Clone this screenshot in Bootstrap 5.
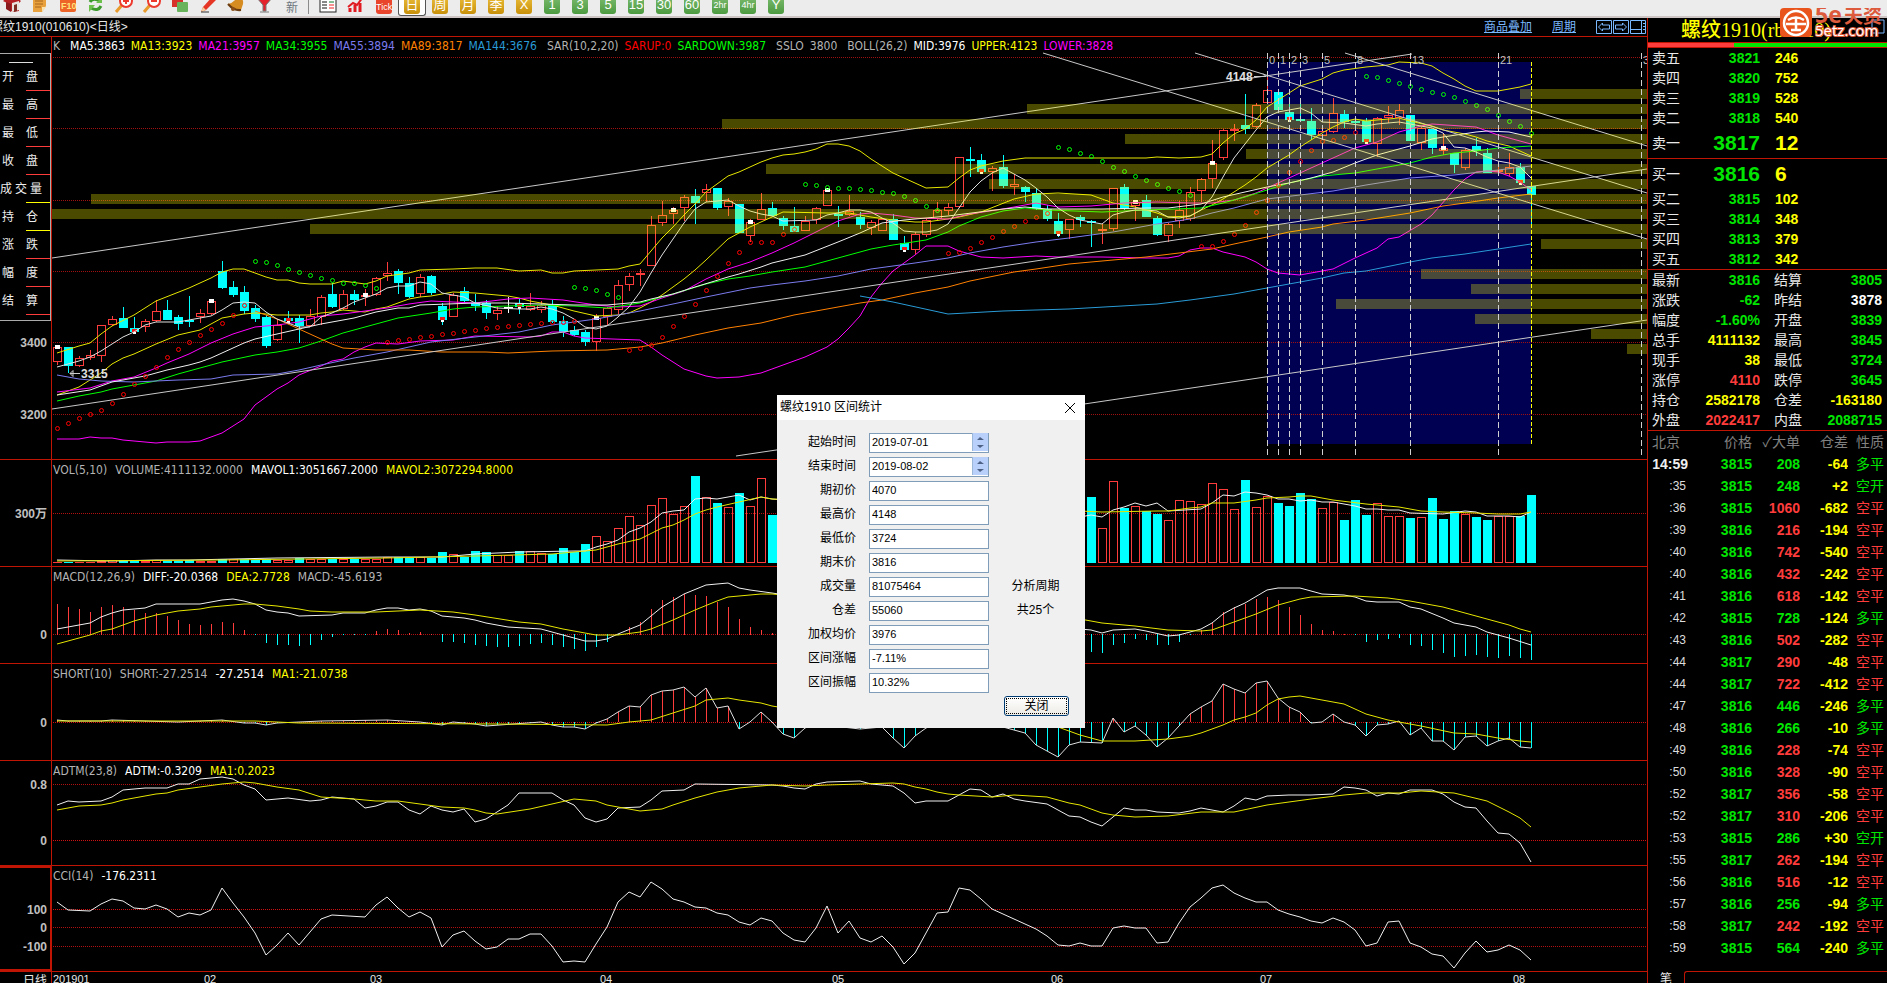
<!DOCTYPE html>
<html lang="zh-CN">
<head>
<meta charset="utf-8">
<meta name="viewport" content="width=device-width, initial-scale=1">
<title>螺纹1910 日线</title>
<link href="https://cdn.jsdelivr.net/npm/bootstrap@5.3.0/dist/css/bootstrap.min.css" rel="stylesheet">
<style>
:root{--line:#c01404;--up:#ff3c3c;--dn:#00ffff;--cjk:"Liberation Sans","Noto Sans CJK SC",sans-serif;--tah:"DejaVu Sans Condensed","Noto Sans CJK SC",sans-serif}
body{background:#000;color:#e8e8e8;font-family:var(--cjk);font-size:12px;line-height:18px;overflow:hidden}
.tools{background:#ececec;height:18px;border-bottom:2px solid #cdc6c4;overflow:hidden}
.tools button:first-child{margin-left:-2px}
.tools button{width:28px;height:16px;flex:none;background:none;border:0;padding:0 4px;overflow:hidden}
.tools button svg{display:block;width:20px;height:16px}
.tools .mode span{display:block;width:16px;height:20px;margin:-8px auto 0;border-radius:3px;background:linear-gradient(#efc341,#c8900a);color:#fff;font-size:13px;line-height:22px;text-align:center;white-space:nowrap}
.tools .mode.per span{background:linear-gradient(#82bf74,#4c9a40)}
.tools .mode.tick span{background:#e8452c;font-size:9px;line-height:26px}
.tools .mode.tight span{font-size:9px}
.tools .mode.on{background:#fff;border:1px solid #555;border-top:0;border-radius:0 0 3px 3px;padding:0 3px}
.tools .divide{width:1px;background:#8b8b8b;height:14px;flex:none;margin:0 5px 0 2px}
.title-row{height:18px}
.title-row h1{font-size:12px;line-height:18px;font-weight:400;margin:0 0 0 -9px;white-space:nowrap}
.title-row a{color:#7ab8ff;font-size:12px;line-height:16px}
.title-row .nav-ico{width:50px;height:14px}
.pane{border-top:1px solid var(--line);min-height:0;flex-basis:0;overflow:hidden}
.pane .scale{width:52px;flex:none;border-right:1px solid var(--line);min-height:0}
.pane .plot{display:grid;grid-template:minmax(0,1fr)/minmax(0,1fr);flex:1;min-width:0}
.pane .plot>*{grid-area:1/1}
.pane svg{display:block;width:100%;height:100%;min-height:0}
.scale text{fill:#c0c0c0;font:bold 12px var(--cjk);text-anchor:end}
.legend-row{font-family:var(--tah);font-size:12px;line-height:20px;padding-left:1px;gap:8px;white-space:nowrap;z-index:1;height:20px;color:#b4b4b4}
.legend-row.price{gap:6px;line-height:19px}
.cci .scale{border:2px solid var(--line);border-left:0}
.w{color:#fff}.y{color:#ffff00}.g{color:#00e600}.r{color:#ff3c3c}
.quick{position:absolute;left:0;top:53px;width:51px;border:solid #aaa;border-width:1px 1px 1px 0;background:#000;z-index:2;padding-top:8px;height:268px}
.quick i{display:block;width:24px;height:1px;margin-left:9px;background:#ddd}
.quick button{display:flex;justify-content:space-between;width:50px;height:28px;border:0;background:linear-gradient(var(--c),var(--c)) right bottom/24px 1px no-repeat;color:#eee;font-size:12px;line-height:28px;padding:0 12px 0 2px}
.quick button.three{padding:0 8px 0 0}
.side{width:240px;flex:none;border-left:1px solid var(--line)}
.side .code{height:24px;font-family:"Liberation Serif","Noto Sans CJK SC",serif;font-size:20px;line-height:24px;color:#ffff00;margin:0;padding-left:33px;white-space:nowrap}
.ratio{height:6px;border:solid var(--line);border-width:1px 0;background:#00e600}
.ratio div{background:#ff3c3c;height:4px}
.side table{width:239px;table-layout:fixed;border-collapse:collapse;font-size:14px;margin:0}
.side td,.side th{padding:0;font-weight:400;white-space:nowrap;overflow:hidden}
.side .n{font-weight:700;text-align:right}
.book tr,.stat tr{height:20px;line-height:20px}
.book .lab,.stat .lab{padding-left:4px}
.book .v{text-align:left;font-weight:700;padding-left:15px;color:#ffff00}
.book tr.top{height:30px;line-height:30px}
.book tr.top .n,.book tr.top .v{font-size:21px}
.ruled{border-bottom:1px solid var(--line)}
.ticks tr{height:22px;line-height:22px}
.ticks th{color:#808080;text-align:right}
.ticks td:first-child{font-size:12px;text-align:right;padding-right:2px;color:#ddd}
.ticks tr.full td:first-child{font-size:14px;font-weight:700;color:#eee;padding-right:0}
.tabs{height:12px;margin-top:auto;overflow:hidden}
.tabs span{width:36px;padding-left:12px;line-height:16px;flex:none}
.tabs div{flex:1;border:solid var(--line);border-width:1px 0 0 1px;border-radius:3px 0 0 0}
.brand{position:absolute;right:2px;top:8px;width:105px;height:30px;z-index:3}
.dlg{position:absolute;left:777px;top:395px;width:308px;height:333px;background:#f0f0f0;color:#000;z-index:5}
.dlg header{height:25px;background:#fff;padding:0 8px 0 3px}
.dlg header h2{font:12px/25px var(--cjk);margin:0}
.dlg header button{border:0;background:none;padding:0;width:14px;height:25px}
.dlg form{padding:12px 16px 0 0}
.dlg .line{height:24px;display:grid;grid-template-columns:79px 120px 1fr;column-gap:13px;line-height:20px}
.dlg label{text-align:right}
.dlg input{width:100%;height:20px;border:1px solid #7f9db9;background:#fff;font-size:11px;padding:0 0 2px 2px;border-radius:0;color:#000;line-height:16px;min-width:0}
.spin{position:relative}
.spin svg{position:absolute;right:1px;top:1px;width:16px;height:18px}
.dlg .ok{display:block;margin-left:auto;width:65px;height:20px;border:1px solid #003c74;border-radius:3px;background:linear-gradient(#fff,#ecebe5);padding:1px;color:#000}
.dlg .ok span{display:block;border:1px dotted #000;line-height:14px}
</style>
</head>
<body>
<div class="d-flex flex-column vh-100">
<nav class="tools d-flex" aria-label="工具栏">
<button aria-label="首页"><svg viewBox="0 0 20 16"><path d="M1 1L10-6l9 7-2 2v8l-6 1-6-3V3z" fill="#b52025"/><path d="M4 2l5 2v8l-5-3z" fill="#8a1a1d"/><path d="M10 3l7-2v9l-7 2z" fill="#e9e3dd"/><path d="M12 5l3-1v7l-3 1z" fill="#7c2b22"/></svg></button>
<button aria-label="记事"><svg viewBox="0 0 20 16"><path d="M3-4h13v10l-4 6H3z" fill="#e8a13c"/><path d="M5 1h8M5 4h8M5 7h6" stroke="#a8641a"/><path d="M12 12V7h4z" fill="#fbe3b0"/></svg></button>
<button aria-label="F10"><svg viewBox="0 0 20 16"><rect x="2" y="-6" width="16" height="18" rx="2" fill="#ee6428"/><text x="3" y="9" font-size="9" font-weight="bold" fill="#ffe27a">F10</text></svg></button>
<button aria-label="刷新"><svg viewBox="0 0 20 16" fill="none" stroke="#3c9a2c" stroke-width="3"><path d="M4 2q3-5 10-1M15 6q-3 6-10 2"/><path d="M16-3v6h-6zM3 12V5h6z" fill="#6cc04c" stroke="none"/></svg></button>
<button aria-label="放大"><svg viewBox="0 0 20 16"><path d="M8 5l-6 7" stroke="#e89a2c" stroke-width="3"/><circle cx="12" cy="1" r="6" fill="#fff" stroke="#ed3a2e" stroke-width="2"/><path d="M9 1h6M12-2v6" stroke="#ed3a2e" stroke-width="2"/></svg></button>
<button aria-label="缩小"><svg viewBox="0 0 20 16"><path d="M8 5l-6 7" stroke="#e89a2c" stroke-width="3"/><circle cx="12" cy="1" r="6" fill="#fff" stroke="#ed3a2e" stroke-width="2"/><path d="M9 1h6" stroke="#ed3a2e" stroke-width="2"/></svg></button>
<button aria-label="叠加"><svg viewBox="0 0 20 16"><rect x="2" y="-4" width="11" height="11" fill="#d8312b"/><rect x="7" y="2" width="11" height="10" rx="1" fill="#69b35c"/></svg></button>
<button aria-label="画线"><svg viewBox="0 0 20 16"><path d="M3 12l2-5L15-4l4 3L8 10z" fill="#e53525"/><path d="M3 12l2-5 3 3z" fill="#f6cf9c"/><path d="M3 12l8 0" stroke="#333"/></svg></button>
<button aria-label="预警"><svg viewBox="0 0 20 16"><path d="M12-4q6 2 5 8l-2 6Q7 11 2 4q6-1 10-8z" fill="#d78c22"/><path d="M2 4q6 7 13 6" stroke="#6b3c10" stroke-width="2" fill="none"/><circle cx="7" cy="9" r="2" fill="#8b4e16"/></svg></button>
<button aria-label="筛选"><svg viewBox="0 0 20 16"><path d="M3-2h15l-6 7v6H9V5z" fill="#e4202a" stroke="#777"/><path d="M6 12h9" stroke="#777"/></svg></button>
<button class="text-secondary" style="font-size:12px;line-height:9px" aria-label="新">新</button>
<span class="divide"></span>
<button aria-label="报价"><svg viewBox="0 0 20 16"><rect x="2" y="-3" width="16" height="15" fill="#fff" stroke="#222"/><path d="M4 2h5M4 5h5M4 8h5" stroke="#111"/><path d="M11 2h5" stroke="#0a7a2a"/><path d="M11 5h5M11 8h5" stroke="#e22"/></svg></button>
<button aria-label="走势"><svg viewBox="0 0 20 16"><path d="M4 12V8M9 12V5M14 12V3" stroke="#e11b22" stroke-width="3"/><path d="M2 7l5-4 4 2 6-8" stroke="#e11b22" stroke-width="2" fill="none"/></svg></button>
<button class="mode tick"><span>Tick</span></button><button class="mode on"><span>日</span></button><button class="mode"><span>周</span></button><button class="mode"><span>月</span></button><button class="mode"><span>季</span></button><button class="mode"><span>X</span></button>
<button class="mode per"><span>1</span></button><button class="mode per"><span>3</span></button><button class="mode per"><span>5</span></button><button class="mode per"><span>15</span></button><button class="mode per"><span>30</span></button><button class="mode per"><span>60</span></button><button class="mode per tight"><span>2hr</span></button><button class="mode per tight"><span>4hr</span></button><button class="mode per"><span>Y</span></button>
</nav>

<div class="d-flex flex-grow-1" style="min-height:0">
<main class="d-flex flex-column flex-grow-1" style="min-width:0">
<div class="title-row d-flex align-items-center">
<h1 class="me-auto">螺纹1910(010610)&lt;日线&gt;</h1>
<a href="#" class="me-3 pe-1">商品叠加</a><a href="#" class="me-3 pe-1">周期</a>
<svg class="nav-ico flex-shrink-0" viewBox="0 0 50 14" fill="none" stroke="#7ab8ff" style="margin-right:1px"><path d="M.5.5h15v13H.5zM17.5.5h15v13h-15zM34.5.5h15v13h-15z"/><path d="M2.500 7l4-4v2h7v4h-7v2zM30.500 7l-4-4v2h-7v4h7v2zM35 9.500h11M45.500 1v12M47 3.500h2M47 6.500h2M47 9.500h2"/></svg>
</div>

<section class="pane d-flex" style="flex-grow:422">
<div class="scale"><svg viewBox="0 37 51 422" preserveAspectRatio="none"><text x="47" y="347">3400</text><text x="47" y="419">3200</text></svg></div>
<div class="plot"><svg id="main" viewBox="52 37 1595 422" preserveAspectRatio="none"></svg>
<div class="legend-row price d-flex"><span class="me-1">K</span><span class="w">MA5:3863</span><span class="y">MA13:3923</span><span style="color:#f0f">MA21:3957</span><span style="color:#0f0">MA34:3955</span><span style="color:#7b7bef">MA55:3894</span><span style="color:#ff8000">MA89:3817</span><span style="color:#299bd7">MA144:3676</span><span class="ms-1">SAR(10,2,20)</span><span style="color:#f00">SARUP:0</span><span style="color:#0f0">SARDOWN:3987</span><span class="ms-1">SSLO</span><span>3800</span><span class="ms-1">BOLL(26,2)</span><span class="w">MID:3976</span><span class="y">UPPER:4123</span><span style="color:#f0f">LOWER:3828</span></div></div>
</section>
<section class="pane d-flex" style="flex-grow:106">
<div class="scale"><svg viewBox="0 460 51 106" preserveAspectRatio="none"><text x="47" y="518">300万</text></svg></div>
<div class="plot"><svg id="vol" viewBox="52 460 1595 106" preserveAspectRatio="none"></svg>
<div class="legend-row d-flex"><span>VOL(5,10)</span><span>VOLUME:4111132.0000</span><span class="w">MAVOL1:3051667.2000</span><span class="y">MAVOL2:3072294.8000</span></div></div>
</section>
<section class="pane d-flex" style="flex-grow:96">
<div class="scale"><svg viewBox="0 567 51 96" preserveAspectRatio="none"><text x="47" y="639">0</text></svg></div>
<div class="plot"><svg id="macd" viewBox="52 567 1595 96" preserveAspectRatio="none"></svg>
<div class="legend-row d-flex"><span>MACD(12,26,9)</span><span class="w">DIFF:-20.0368</span><span class="y">DEA:2.7728</span><span>MACD:-45.6193</span></div></div>
</section>
<section class="pane d-flex" style="flex-grow:96">
<div class="scale"><svg viewBox="0 664 51 96" preserveAspectRatio="none"><text x="47" y="727">0</text></svg></div>
<div class="plot"><svg id="short" viewBox="52 664 1595 96" preserveAspectRatio="none"></svg>
<div class="legend-row d-flex"><span>SHORT(10)</span><span>SHORT:-27.2514</span><span class="w">-27.2514</span><span class="y">MA1:-21.0738</span></div></div>
</section>
<section class="pane d-flex" style="flex-grow:104">
<div class="scale"><svg viewBox="0 761 51 104" preserveAspectRatio="none"><text x="47" y="789">0.8</text><text x="47" y="845">0</text></svg></div>
<div class="plot"><svg id="adtm" viewBox="52 761 1595 104" preserveAspectRatio="none"></svg>
<div class="legend-row d-flex"><span>ADTM(23,8)</span><span class="w">ADTM:-0.3209</span><span class="y">MA1:0.2023</span></div></div>
</section>
<section class="pane cci d-flex" style="flex-grow:105">
<div class="scale"><svg viewBox="0 868 50 101" preserveAspectRatio="none"><text x="47" y="914">100</text><text x="47" y="932">0</text><text x="47" y="951">-100</text></svg></div>
<div class="plot"><svg id="cci" viewBox="52 866 1595 105" preserveAspectRatio="none"></svg>
<div class="legend-row d-flex"><span>CCI(14)</span><span class="w">-176.2311</span></div></div>
</section>
<section class="pane d-flex" style="flex:0 0 12px">
<div class="scale text-end" style="line-height:19px;padding-right:4px">日线</div>
<div class="plot"><svg id="months" viewBox="52 972 1595 11" preserveAspectRatio="none"></svg></div>
</section>
</main>

<aside class="side d-flex flex-column">
<h2 class="code">螺纹1910(rb1910)</h2>
<div class="ratio"><div style="width:36%"></div></div>
<table class="book"><colgroup><col style="width:50px"><col style="width:62px"><col></colgroup><tbody id="sell"></tbody><tbody id="buy"></tbody></table>
<table class="stat ruled"><colgroup><col style="width:46px"><col style="width:66px"><col style="width:54px"><col style="width:68px"><col></colgroup><tbody id="stat"></tbody></table>
<table class="ticks"><colgroup><col style="width:40px"><col style="width:64px"><col style="width:48px"><col style="width:48px"><col style="width:36px"><col></colgroup>
<thead><tr><th style="text-align:left;padding-left:4px">北京</th><th>价格</th><th>✓大单</th><th>仓差</th><th>性质</th><th></th></tr></thead><tbody id="ticks"></tbody></table>
<div class="tabs d-flex"><span>笔</span><div></div></div>
</aside>
</div>
</div>

<div class="quick"><i></i>
<button style="--c:#ff3c3c"><span>开</span><span>盘</span></button><button style="--c:#ff3c3c"><span>最</span><span>高</span></button><button style="--c:#ff3c3c"><span>最</span><span>低</span></button><button style="--c:#ff3c3c"><span>收</span><span>盘</span></button><button class="three" style="--c:#ff0"><span>成</span><span>交</span><span>量</span></button><button style="--c:#ff0"><span>持</span><span>仓</span></button><button style="--c:#ff3c3c"><span>涨</span><span>跌</span></button><button style="--c:#ff3c3c"><span>幅</span><span>度</span></button><button style="--c:#ff3c3c"><span>结</span><span>算</span></button>
</div>

<svg class="brand" viewBox="0 0 105 30" role="img" aria-label="5e天资">
<path d="M92 12h12v13H92z" fill="none" stroke="#7ab8ff"/>
<rect x="0" y="0" width="32" height="29" rx="4" fill="#e8541c"/>
<circle cx="16" cy="15" r="12" fill="none" stroke="#fff" stroke-width="2.500"/>
<path d="M8 12q8-5 16 0M6 16h20M16 10v13M11 22h10" stroke="#fff" stroke-width="2.500" fill="none"/>
<text x="35" y="15" font-family="Open Sans,sans-serif" font-size="23" font-weight="bold" fill="#dd5a3c">5e</text><text x="64" y="15" font-family="Noto Sans CJK SC,sans-serif" font-size="19" font-weight="bold" fill="#dd5a3c">天资</text>
<text x="35" y="28" font-family="Open Sans,sans-serif" font-size="15" fill="#fff" stroke="#dd5a3c" stroke-width="2" paint-order="stroke">5etz.com</text>
</svg>

<div class="dlg" role="dialog" aria-labelledby="dt">
<header class="d-flex justify-content-between"><h2 id="dt">螺纹1910 区间统计</h2><button aria-label="关闭窗口"><svg width="12" height="12" viewBox="0 0 12 12" stroke="#000" fill="none"><path d="M1 1l10 10M11 1L1 11"/></svg></button></header>
<form onsubmit="return false">
<div id="fields"></div>
<button type="button" class="ok"><span>关闭</span></button>
</form>
</div>

<script>
const X = i => 57 + 11 * i;
// type, body top, body bottom, high, low
const candles = `r347,362,346,365 c347,366,347,373 r358,366,356,367 r355,358,350,360 r325,356,325,362 r319,325,316,326 c318,328,307,328 c328,332,317,334 r321,327,319,332 r311,321,300,322
c310,320,300,320 c317,324,315,330 c320,322,296,327 r313,317,309,323 r301,314,301,315 c271,288,261,289 c287,295,281,297 c292,311,286,314 c308,319,305,322 c317,346,315,348
r325,340,319,341 c318,321,311,323 c318,326,315,343 r316,326,309,327 r297,317,295,325 c294,307,283,308 r294,309,290,310 c294,300,290,305 r295,297,289,306 r278,295,277,296
r273,276,262,281 c271,283,269,294 c283,297,277,298 r277,294,274,297 c276,293,275,295 c306,320,303,325 r295,317,293,317 c291,301,287,302 c303,306,294,311 c303,313,300,319
r310,314,306,320 w307,309,297,313 c303,307,299,314 r306,310,293,311 r305,310,301,313 c305,322,300,323 c321,332,316,337 c330,335,326,336 c332,342,330,346 r318,342,314,351
r308,317,307,325 r285,310,280,314 r276,285,273,291 r273,275,269,286 r225,266,216,266 r215,223,201,226 r210,214,207,224 r197,208,195,221 c196,203,189,224 r189,193,184,202
c188,208,188,210 r201,207,198,216 c204,233,204,233 r222,236,219,242 r209,220,193,220 c208,216,202,216 c218,226,216,230 c226,232,207,232 r221,231,216,231 r208,220,207,224
r190,206,188,206 c214,216,206,227 r211,215,195,216 c217,225,212,229 r222,228,220,235 r219,231,219,231 c219,240,214,240 c243,250,236,252 r234,250,232,254 r220,235,219,237
r210,219,202,220 r207,211,203,215 r157,207,157,208 c159,161,147,177 c160,172,154,173 r168,172,166,191 c167,186,155,188 r184,187,174,195 c187,192,186,202 c193,209,188,210
c209,219,205,221 c221,234,213,237 r219,230,219,239 c217,220,215,227 c221,223,220,247 r229,231,224,244 r188,229,188,231 c187,209,184,210 r202,206,200,221 c200,217,195,217
c218,235,216,236 r224,236,223,242 r210,221,201,228 r192,219,187,221 r179,191,178,202 r163,179,140,188 r130,158,129,160 r129,131,124,141 c125,129,94,134 r105,127,103,128
r90,103,77,103 c92,110,92,110 c112,120,97,120 c119,121,101,121 c121,135,108,140 r131,136,130,137 r113,132,98,133 c114,122,110,128 c121,123,118,127 c121,142,118,142
r118,144,117,157 r115,118,106,123 r110,118,104,125 c115,141,115,141 r128,143,127,150 c129,148,129,154 r148,151,133,155 c153,165,153,173 r150,168,148,170 c146,151,138,156
c153,173,148,173 r170,172,165,174 r167,174,153,176 c167,183,163,185 c186,195,184,228`.split(/\s+/).map(s => [s[0], ...s.slice(1).split(',').map(Number)]);

const parse = s => s.trim().split(/\s+/).map(p => p.split(',').map(Number));
const poly = (s, c) => `<polyline points="${parse(s).map(([i, y]) => X(i) + ',' + y).join(' ')}" fill="none" stroke="${c}" vector-effect="non-scaling-stroke"/>`;
const rect = (x, y, w, h, c) => `<rect x="${x}" y="${y}" width="${w}" height="${h}" fill="${c}"/>`;
const box = (x, y, w, h) => `<rect x="${x + .5}" y="${y + .5}" width="${w - 1}" height="${h - 1}" fill="none" stroke="#ff3c3c" shape-rendering="crispEdges"/>`;
const seg = (a, b, c, d, col = '#c8c8c8', dash = '') => `<path d="M${a} ${b}L${c} ${d}" stroke="${col}" stroke-dasharray="${dash}" fill="none"/>`;
const grid = (y, c = '#b01010') => `<path d="M53 ${y}.5H1647" stroke="${c}" stroke-dasharray="1 1" shape-rendering="crispEdges"/>`;
const dots = (from, ys, c) => ys.split(',').map((y, k) => `<circle cx="${X(from + k) + .5}" cy="${+y + .5}" r="2" fill="none" stroke="${c}"/>`).join('');
const set = (id, h) => document.getElementById(id).innerHTML = h;
const at = (pts, i) => { let k = 1; while (k < pts.length - 1 && pts[k][0] < i) k++; const [a, b] = [pts[k - 1], pts[k]]; return a[1] + (b[1] - a[1]) * (i - a[0]) / (b[0] - a[0]); };

// price pane
let m = rect(1267, 62, 264, 382, '#000052') + [57, 128, 200, 271, 342, 414].map(y => grid(y, '#a01010')).join('');
candles.forEach(([t, a, b, h, l], i) => {
  const x = X(i), c = t === 'r' ? '#ff3c3c' : t === 'w' ? '#fff' : '#0ff';
  if (t === 'r') m += rect(x, h, 1, a - h, c) + rect(x, b, 1, l - b, c) + (b - a > 2 ? box(x - 4, a, 9, b - a) : rect(x - 4, a, 9, b - a, c));
  else m += rect(x, h, 1, l - h, c) + rect(x - 4, a, 9, b - a, c);
  if (i % 7 === 0) m += t === 'r' ? rect(x - 2, a - 2, 5, 4, '#fff') : rect(x - 2, b - 3, 5, 3, '#f01818') + rect(x - 1, b, 3, 2, '#fff');
});
m += [
['0,353 2,346 3,343 4,334 5,326 7,315 9,301 12,288 14,278 15,272 16,269 17,269 18,273 19,277 20,280 21,280 22,283 23,284 25,284 26,281 28,284 29,281 30,276 32,273 33,270 36,269 38,268 40,268 42,271 44,270 45,273 46,273 47,271 51,269 52,266 53,264 54,251 55,238 56,227 57,215 58,204 59,192 61,176 62,172 63,167 64,162 65,158 66,155 67,154 68,152 69,149 70,144 71,144 72,146 73,151 74,159 75,166 76,173 78,183 79,188 81,187 82,178 83,170 84,166 86,161 88,158 99,158 100,157 102,158 104,157 105,154 106,143 107,134 108,129 109,120 110,107 112,93 113,86 115,79 116,73 117,70 119,67 121,65 122,62 124,63 125,66 126,73 127,79 128,86 129,91 131,91 133,87 134,84', '#e6e600'],
['0,395 2,387 4,373 5,364 6,358 7,354 9,344 11,335 13,330 15,318 17,314 18,313 20,315 23,315 24,313 25,312 26,310 28,312 29,309 30,307 31,303 32,299 33,297 34,296 36,292 38,293 41,296 42,298 43,301 44,303 45,305 46,308 47,311 49,316 51,315 52,313 53,308 54,302 55,295 56,287 57,279 58,270 59,260 61,239 63,227 65,217 66,212 70,213 72,213 74,217 76,220 78,222 79,222 81,219 82,217 84,212 87,199 89,194 91,193 94,195 95,199 96,203 98,207 100,213 101,217 103,216 104,210 105,205 106,199 108,185 109,177 110,168 112,155 113,147 115,133 116,127 117,122 118,119 119,121 122,118 123,121 125,126 126,130 128,134 129,137 130,141 132,146 133,151 134,156', '#e6e600'],
['0,392 3,388 5,381 7,377 9,368 10,363 12,354 14,343 16,334 18,327 20,325 22,322 24,316 26,314 28,311 30,308 32,304 34,301 38,303 41,299 43,298 46,300 49,305 51,307 53,306 55,298 57,291 59,279 61,269 63,262 65,253 67,243 69,232 71,221 73,214 74,213 76,215 78,218 81,219 83,214 86,209 89,203 91,207 94,206 97,203 100,202 103,203 105,203 107,200 109,193 111,183 113,173 115,163 116,158 118,148 120,142 122,132 124,126 125,124 129,127 131,135 134,144', '#f0f'],
['0,439 2,439 3,437 4,438 5,438 6,440 9,443 10,442 12,442 13,441 15,433 17,419 18,405 19,397 20,389 21,383 22,375 24,366 25,361 26,359 27,352 28,347 29,343 31,344 33,341 36,340 38,336 43,337 44,336 45,332 46,332 47,336 48,338 53,340 54,347 55,355 57,369 59,376 60,378 62,377 64,373 68,357 70,347 71,339 72,328 73,316 74,297 75,283 76,271 78,255 79,246 81,246 82,251 84,257 86,258 89,256 91,257 95,257 99,258 101,258 102,256 103,250 104,248 105,248 106,252 108,257 109,262 110,269 111,273 113,275 115,271 116,269 118,258 120,248 121,239 122,237 124,224 125,215 127,190 128,179 129,172 130,171 131,172 132,176 133,182 134,190', '#f0f'],
['0,401 2,396 4,392 5,389 7,385 9,381 11,374 13,368 15,362 18,355 20,352 22,348 24,341 26,333 28,327 31,318 34,313 36,309 38,307 44,305 47,306 50,308 53,303 56,294 59,284 61,279 63,276 65,272 68,267 70,261 72,255 74,249 76,245 79,240 81,232 82,226 84,217 86,211 88,208 90,210 95,212 99,210 104,208 106,203 108,197 110,190 112,183 115,176 118,173 121,167 123,163 125,157 127,153 129,151 131,148 134,146', '#0f0'],
['0,375 2,379 4,381 7,382 11,380 14,379 16,375 20,374 22,370 24,365 27,358 30,352 32,347 34,342 38,337 42,332 45,325 49,319 51,315 53,311 56,304 59,297 63,288 65,285 68,281 71,276 74,269 78,263 81,258 83,253 86,247 89,242 92,238 96,232 100,224 103,219 105,213 107,208 110,199 113,195 116,191 119,185 123,178 127,175 131,170 134,166', '#7b7bef'],
['18,311 20,319 22,329 25,344 26,348 29,350 32,350 35,352 39,352 41,353 45,351 50,350 53,347 55,343 58,335 61,328 64,323 67,315 70,309 73,303 75,300 78,293 81,287 83,281 87,272 89,269 92,264 95,261 99,257 102,253 105,249 107,244 110,237 112,232 115,227 116,224 119,220 123,213 126,206 128,203 131,198 134,194', '#ff8000'],
['73,296 76,302 81,314 86,311 92,309 100,304 103,300 107,294 110,288 115,278 117,273 119,271 123,262 125,258 128,254 131,249 134,244', '#299bd7'],
['0,395 3,390 5,382 8,376 10,370 12,365 13,362 14,358 15,353 16,348 17,343 18,339 20,334 22,329 24,324 27,318 29,312 31,308 32,308 33,305 38,303 41,303 44,304 47,305 50,305 53,302 54,299 56,294 58,287 61,277 62,274 64,267 65,263 68,255 71,242 73,233 75,223 77,220 79,218 81,216 86,209 88,207 90,209 95,209 99,208 101,208 104,204 106,197 108,192 110,187 112,183 114,178 116,172 118,163 120,155 123,146 125,139 126,137 129,132 130,131 132,132 134,137', '#f0f0f0'],
['0,367 2,361 3,357 4,351 5,344 6,337 7,332 8,325 9,322 11,322 12,320 14,316 15,310 16,303 17,302 18,303 19,312 20,319 21,323 22,327 23,327 24,317 25,313 26,308 27,302 28,298 29,294 30,288 31,286 32,286 33,282 34,284 35,293 36,295 37,297 38,303 40,308 42,309 43,309 44,307 45,309 46,313 47,319 48,327 49,329 50,326 51,317 52,307 53,292 54,273 55,255 56,239 57,223 58,209 59,202 60,201 61,200 62,206 63,211 64,214 65,216 66,221 69,220 70,215 71,213 72,210 73,210 74,212 75,218 76,223 77,231 78,232 79,232 80,230 81,224 82,208 83,192 84,181 85,173 86,168 87,174 88,180 89,188 90,197 91,208 92,215 93,220 95,224 96,215 97,212 98,210 99,210 100,211 101,217 102,218 103,216 104,210 105,197 106,177 107,158 108,144 109,130 110,117 111,112 112,110 113,108 114,113 115,122 117,123 119,126 120,124 122,122 123,124 124,126 125,128 126,133 127,147 128,148 129,152 130,157 131,161 132,163 133,167 134,178', '#e0e0e0']
].map(a => poly(...a)).join('');
m += dots(18, '261,262,265,269,272,275,278,280,283,283,285,288', '#0f0') + dots(47, '287,288,290,294,297', '#0f0') + dots(68, '184,185,187,188,188,189,190,192,193,196,200,206,210', '#0f0') + dots(91, '147,149,153,156,161,167,171,176,180,184,188,191,195', '#0f0') + dots(119, '76,77,80,83,86,89,92,94,97,101,105,109,115,121,126,133', '#0f0');
m += dots(0, '428,423,418,414,410,403,394,384,376,367,357,349,342,335,329,323,315,305', '#f00') + dots(30, '342,340,339,337,336,334,333,331,330,328,327,326,325,324,323,322,322,321', '#f00') + dots(52, '350,348,345,337,326,316,304,290,276,263,252,242,242,242,234,229', '#f00') + dots(81, '253,252,248,242,237,231,226,221,217,213', '#f00') + dots(104, '246,246,241,234,225,212,200,185,172,161,150,141,140,137,132', '#f00');
m += seg(52, 258, 1412, 54) + seg(52, 409, 1647, 169) + seg(736, 456, 1647, 320) + seg(1043, 53, 1647, 239) + seg(1195, 53, 1647, 193) + seg(1345, 53, 1647, 146);
// volume-at-price bars
[[89,1520],[104,1027],[119,722],[134,1125],[149,1246],[164,766],[179,989],[194,91],[209,52],[224,310],[239,1541],[269,1421],[284,1471],[299,1336],[314,1475],[329,1591],[344,1627]].forEach(([y, x]) => m += rect(x, y, 1647 - x, 10, 'rgba(255,255,0,.29)'));
// Fibonacci time lines
[0, 1, 2, 3, 5, 8, 13, 21, 34].forEach(n => { const x = X(110 + n); m += seg(x + .5, 53, x + .5, 456, '#d0d0d0', '6 3') + `<text x="${x + 2}" y="64" font-size="11" fill="#c0c0c0" font-family="Liberation Sans">${n}</text>`; });
m += seg(1531.5, 62, 1531.5, 444, '#ff0', '4 2');
m += `<g fill="#e0e0e0" font-family="Liberation Sans" font-size="12" font-weight="bold"><text x="81" y="378">3315</text><text x="1226" y="81">4148</text></g><path d="M70 373.500h10M70 373.500l3-3v6zM1254 76.500h12l-3-3" stroke="#ccc" fill="none"/>`;
set('main', m);

// volume pane
const volH = '1,1,1,1,2,3,3,3,2,3,2,2,3,2,2,4,4,4,3,4,3,3,5,4,4,4,4,4,4,4,6,6,5,6,5,11,9,6,12,11,8,8,12,12,10,9,15,11,19,27,22,35,47,38,58,65,49,57,87,66,60,56,70,57,85,48,50,62,58,40,44,52,60,45,48,50,62,70,55,50,44,48,66,60,55,48,44,40,42,46,50,52,48,45,66,35,82,55,57,52,49,43,63,62,59,80,74,54,83,56,67,60,57,70,64,55,61,43,63,48,60,47,47,45,46,65,44,52,49,46,43,47,47,47,68'.split(',').map(Number);
const cyanAt = new Set([1,6,7,10,11,12,15,17,18,19,22,25,27,31,32,34,35,37,38,39,42,45,46,47,48,58,60,62,65,66,69,72,76,77,83,86,89,90,94,97,99,100,108,111,112,113,114,117,118,119,123,125,126,127,129,130,133,134]);
let v = grid(513);
volH.forEach((h, i) => v += cyanAt.has(i) ? rect(X(i) - 4, 563 - h, 9, h, '#0ff') : h > 2 ? box(X(i) - 4, 563 - h, 9, h) : rect(X(i) - 4, 563 - h, 9, h, '#ff3c3c'));
v += poly('0,560 5,561 9,560 12,560 20,558 30,557 35,557 38,554 42,552 47,551 48,551 49,547 50,544 51,540 52,532 53,528 54,522 55,513 56,511 57,510 58,499 59,498 60,499 62,495 63,500 64,497 65,499 75,508 85,505 93,517 94,515 95,517 96,510 97,507 98,503 99,506 100,503 101,511 104,509 105,503 106,495 107,496 108,492 109,493 110,495 111,499 112,499 113,501 114,500 115,502 116,502 118,506 119,509 120,509 121,510 122,510 123,513 126,514 128,511 129,512 130,516 132,516 133,517 134,512', '#f0f0f0')
 + poly('0,561 15,560 30,558 38,556 45,554 49,550 51,544 53,539 55,528 56,525 57,520 58,514 59,510 60,507 62,502 64,497 65,499 80,505 93,511 95,512 100,511 101,511 103,508 104,507 105,503 107,503 109,500 110,498 112,497 113,496 114,496 116,500 119,504 122,507 124,511 126,512 129,513 131,514 133,514 134,512', '#e6e600');
set('vol', v);

// MACD pane
const hist = '31,28,26,23,28,30,28,25,22,22,19,15,11,10,11,13,12,5,0,-9,-11,-11,-12,-11,-6,-3,0,-1,0,4,6,5,2,3,1,-8,-8,-9,-11,-12,-13,-13,-12,-10,-9,-11,-13,-15,-17,-13,-8,0,8,13,26,35,38,41,40,39,33,28,16,8,5,2,-3,-6,-8,-10,-8,-6,-8,-10,-12,-14,-16,-18,-12,-6,2,6,14,16,12,8,2,-4,-8,-12,-14,-18,-20,-20,-18,-19,-11,-9,-5,-6,-11,-11,-8,0,5,12,23,28,31,36,38,35,28,20,11,5,4,1,0,-8,-6,-5,-4,-11,-12,-16,-19,-23,-22,-21,-23,-24,-22,-24,-26'.split(',').map(Number);
let d = grid(634);
hist.forEach((h, i) => d += h > 0 ? rect(X(i), 635 - h, 1, h, '#ff3c3c') : rect(X(i), 634, 1, -h || 1, '#0ff'));
d += poly('0,629 3,623 4,617 5,613 6,610 8,608 9,604 13,604 15,600 16,599 17,601 18,604 19,610 20,612 21,613 22,616 25,615 26,613 28,613 29,610 30,608 31,608 32,610 33,609 34,611 35,616 37,618 38,620 39,623 41,627 44,629 45,632 48,641 49,641 50,639 51,634 53,625 54,616 55,607 57,594 59,585 61,583 62,588 63,590 65,593 75,610 84,605 93,629 94,630 95,633 96,630 98,629 99,631 101,636 102,635 103,632 104,629 105,623 106,614 107,608 108,603 110,590 111,588 113,588 115,594 117,595 118,597 119,601 120,602 122,602 123,607 124,609 126,618 127,623 129,627 130,632 132,638 134,645', '#f0f0f0')
 + poly('0,644 3,635 4,631 5,629 7,621 9,615 11,611 13,609 14,607 16,605 17,604 18,604 20,606 22,609 23,611 25,612 29,612 33,610 36,612 38,615 42,622 44,624 46,629 49,635 51,635 53,632 54,629 56,620 58,610 60,601 61,597 64,594 65,594 80,608 93,619 95,623 98,626 101,630 104,631 105,630 107,622 109,614 111,605 113,599 114,597 118,596 121,598 123,601 126,607 129,616 132,625 133,629 134,632', '#e6e600');
set('macd', d);

// SHORT pane: bars run from zero to the line
const shortLine = '0,720 1,721 4,721 5,720 8,721 11,722 15,720 17,723 18,723 19,725 20,723 24,721 30,720 33,722 35,725 36,722 38,724 39,726 44,722 45,725 46,727 47,727 48,729 49,723 50,719 51,712 52,706 53,707 54,695 55,691 56,690 57,687 58,697 59,688 60,708 61,706 62,729 63,722 64,712 65,722 66,734 67,738 68,728 69,724 73,729 75,727 76,738 77,748 78,736 79,728 82,715 86,727 88,733 89,745 90,751 91,757 92,745 93,742 95,743 96,718 97,732 98,726 99,735 100,747 101,738 102,726 103,714 104,707 105,701 106,684 107,689 108,693 109,683 110,681 111,698 112,707 113,712 114,723 115,722 116,714 117,722 118,725 119,736 120,725 121,724 122,721 123,735 124,728 125,741 126,741 127,750 128,737 129,736 130,746 131,741 132,738 133,747 134,748';
const sp = parse(shortLine);
let s = grid(722, '#d01010');
for (let i = 0; i < 135; i++) { const y = Math.round(at(sp, i)); s += y < 722 ? rect(X(i), y, 1, 722 - y, '#ff3c3c') : rect(X(i), 722, 1, y - 722, '#0ff'); }
s += poly(shortLine, '#e0e0e0') + poly('0,721 18,721 22,723 40,724 50,725 52,722 54,720 56,713 58,706 59,700 60,699 61,698 62,700 64,703 65,706 75,724 85,722 91,727 93,735 95,741 98,741 101,739 103,736 104,733 106,725 107,720 108,717 109,713 110,705 111,699 112,697 113,696 115,700 117,704 119,714 121,720 123,724 124,726 127,733 129,734 131,738 133,741 134,742', '#e6e600');
set('short', s);

set('adtm', grid(784) + grid(840, '#d01010') + poly('0,805 1,801 2,802 4,801 5,797 6,790 8,788 10,788 11,784 12,784 13,779 15,777 16,779 17,785 18,789 19,800 21,798 23,801 24,800 25,797 27,799 28,808 29,806 30,802 31,802 32,810 33,814 34,806 35,810 36,812 37,809 38,822 39,819 41,805 42,793 45,793 46,800 47,805 48,818 49,822 50,819 51,808 53,807 54,800 55,791 57,790 58,784 65,785 66,786 67,788 68,789 69,784 70,782 73,781 74,784 76,786 77,793 78,803 79,801 81,801 82,795 83,789 84,790 85,797 86,794 87,799 88,801 90,804 91,810 92,816 93,817 94,822 95,826 96,817 97,808 98,810 99,810 100,812 102,813 103,811 104,808 106,812 107,806 108,798 109,800 110,796 112,795 114,795 116,794 117,787 118,788 119,790 120,796 121,793 122,794 123,790 125,790 126,794 127,802 128,807 129,808 130,821 131,833 132,834 133,843 134,862', '#f0f0f0')
 + poly('0,810 2,806 4,805 5,803 6,800 7,798 9,794 10,793 11,790 13,787 15,784 17,782 18,783 19,785 20,787 22,790 24,797 27,799 29,801 31,801 33,804 35,807 37,808 38,810 39,813 40,814 43,809 45,804 47,799 49,801 50,805 52,809 53,811 55,809 56,805 58,798 60,792 62,788 65,785 68,786 70,785 76,783 77,784 78,787 79,789 80,792 81,794 82,795 85,797 87,795 90,797 91,800 92,803 93,805 94,809 95,813 96,815 98,817 101,816 104,812 107,812 110,805 112,802 114,799 117,795 119,793 122,793 124,791 127,793 130,801 132,812 133,818 134,827', '#e6e600'));
set('cci', grid(909, '#d01010') + grid(927) + grid(946) + poly('0,902 1,910 3,911 4,904 5,899 6,901 7,908 8,909 9,905 10,909 11,917 12,913 13,915 14,910 15,888 16,903 17,917 18,933 19,955 20,945 21,933 22,945 23,932 24,919 25,915 28,917 29,905 30,897 31,908 32,917 33,912 34,918 35,947 36,935 37,931 38,941 39,949 40,947 41,939 42,939 43,934 44,934 45,946 46,962 47,961 48,962 49,944 50,927 51,902 52,892 53,897 54,882 55,889 56,899 57,902 58,907 59,908 60,913 61,915 62,922 63,925 64,918 65,921 66,933 67,940 68,942 69,928 70,906 71,933 72,921 73,938 74,942 75,936 76,947 77,964 78,953 79,933 80,913 81,912 82,888 83,890 84,899 85,909 86,914 87,919 88,924 89,929 90,936 91,945 92,946 93,943 94,946 95,946 96,928 97,926 98,928 99,928 100,943 101,942 102,923 103,907 104,898 105,888 106,885 107,893 108,898 109,902 110,902 111,910 112,914 113,917 114,921 115,923 116,918 117,922 118,930 119,946 120,943 121,922 122,921 123,943 124,947 125,954 126,956 127,968 128,953 129,941 130,952 131,950 132,945 133,950 134,960', '#f0f0f0'));
set('months', [['201901', 53], ['02', 204], ['03', 370], ['04', 600], ['05', 832], ['06', 1051], ['07', 1260], ['08', 1513]].map(([t, x]) => `<text x="${x}" y="983" font-size="11" fill="#e8e8e8" font-family="Liberation Sans">${t}</text>`).join(''));

// quotes
const lvl = a => a.map(([l, p, q, big]) => `<tr class="${big ? 'top' : ''}"><td class="lab">${l}</td><td class="n g">${p}</td><td class="v">${q}</td></tr>`).join('');
set('sell', lvl([['卖五', 3821, 246], ['卖四', 3820, 752], ['卖三', 3819, 528], ['卖二', 3818, 540], ['卖一', 3817, 12, 1]]));
set('buy', lvl([['买一', 3816, 6, 1], ['买二', 3815, 102], ['买三', 3814, 348], ['买四', 3813, 379], ['买五', 3812, 342]]));
['sell', 'buy'].forEach(id => document.getElementById(id).className = 'ruled');
set('stat', `最新 g 3816 结算 g 3805|涨跌 g -62 昨结 w 3878|幅度 g -1.60% 开盘 g 3839|总手 y 4111132 最高 g 3845|现手 y 38 最低 g 3724|涨停 r 4110 跌停 g 3645|持仓 y 2582178 仓差 y -163180|外盘 r 2022417 内盘 g 2088715`.split('|').map(r => { const [a, b, c, e, f, h] = r.split(' '); return `<tr><td class="lab">${a}</td><td class="n ${b}">${c}</td><td style="padding-left:14px">${e}</td><td class="n ${f}">${h}</td><td></td></tr>`; }).join(''));
set('ticks', `14:59 3815 208 -64 多平|:35 3815 248 +2 空开|:36 3815 1060 -682 空平|:39 3816 216 -194 空平|:40 3816 742 -540 空平|:40 3816 432 -242 空平|:41 3816 618 -142 空平|:42 3815 728 -124 多平|:43 3816 502 -282 空平|:44 3817 290 -48 空平|:44 3817 722 -412 空平|:47 3816 446 -246 多平|:48 3816 266 -10 多平|:49 3816 228 -74 空平|:50 3816 328 -90 空平|:52 3817 356 -58 空平|:52 3817 310 -206 空平|:53 3815 286 +30 空开|:55 3817 262 -194 空平|:56 3816 516 -12 空平|:57 3816 256 -94 多平|:58 3817 242 -192 空平|:59 3815 564 -240 多平`.split('|').map((r, i) => { const [t, p, q, o, k] = r.split(' '), c = k === '空平' ? 'r' : 'g'; return `<tr class="${i ? '' : 'full'}"><td>${t}</td><td class="n g">${p}</td><td class="n ${c}">${q}</td><td class="n y">${o}</td><td class="text-end ${c}">${k}</td><td></td></tr>`; }).join(''));

// interval statistics
set('fields', [['起始时间', '2019-07-01'], ['结束时间', '2019-08-02'], ['期初价', '4070'], ['最高价', '4148'], ['最低价', '3724'], ['期末价', '3816'], ['成交量', '81075464', '分析周期'], ['仓差', '55060', '共25个'], ['加权均价', '3976'], ['区间涨幅', '-7.11%'], ['区间振幅', '10.32%']].map(([l, val, note], i) =>
 `<div class="line"><label for="f${i}">${l}</label><div class="spin"><input type="text" id="f${i}" value="${val}">${i < 2 ? '<svg viewBox="0 0 16 18"><path fill="#b9d0fb" d="M0 0h16v18H0z"/><path d="M0 0v18" stroke="#7f9db9"/><path d="M5 7l3-3 4 3zM5 12l3 3 4-3z" fill="#4d6185"/></svg>' : ''}</div><span class="text-center">${note || ''}</span></div>`).join(''));
</script>
<script src="https://cdn.jsdelivr.net/npm/bootstrap@5.3.0/dist/js/bootstrap.bundle.min.js"></script>
</body>
</html>
